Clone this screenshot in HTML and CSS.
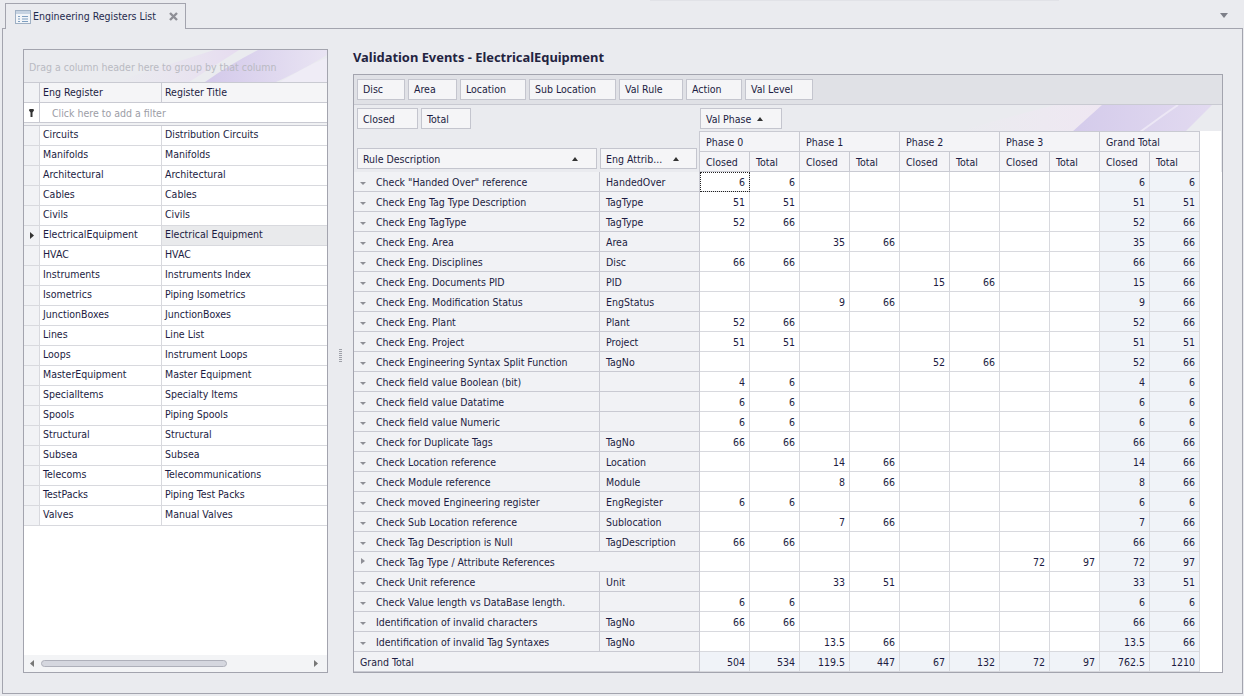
FILE: index.html
```html
<!DOCTYPE html>
<html>
<head>
<meta charset="utf-8">
<title>Engineering Registers List</title>
<link rel="stylesheet" href="styles.css">
</head>
<body>
<div class="topstrip"></div>
<div class="tabbar">
  <div class="tab">
    <svg class="tabicon" width="16" height="14" viewBox="0 0 16 14"><rect x="0.5" y="0.5" width="15" height="13" fill="#f2f5f9" stroke="#9fb0c4"/><rect x="1" y="1" width="14" height="3" fill="#c6d3e2"/><path d="M3 6.500h2M7 6.500h6M3 9h2M7 9h6M3 11.500h2M7 11.500h6" stroke="#7f9fc0"/></svg>
    <span>Engineering Registers List</span>
    <svg class="tabclose" width="9" height="9" viewBox="0 0 9 9"><path d="M1 1l7 7M8 1l-7 7" stroke="#8e8f96" stroke-width="2.400"/></svg>
  </div>
  <svg class="tabmenu" width="8" height="5" viewBox="0 0 8 5"><path d="M0 0h8L4 5z" fill="#7d7f88"/></svg>
</div>
<main class="panel">
  <section class="grid">
    <div class="group">
      <svg class="deco" width="303" height="32" viewBox="0 0 303 32"><defs><linearGradient id="g1" x1="0" x2="1"><stop offset="0" stop-color="#e9e2f1" stop-opacity="0"/><stop offset="1" stop-color="#e6dcf0"/></linearGradient><linearGradient id="g3" x1="0" x2="1"><stop offset="0" stop-color="#d3c9ea"/><stop offset="1" stop-color="#e9e4f3"/></linearGradient></defs><path d="M90 32L190 0H215L165 32z" fill="url(#g1)"/><path d="M181 32C198 20 216 9 234 0H303V5C288 14 272 23 252 32z" fill="url(#g3)"/><path d="M256 32C272 23 290 12 303 8V32z" fill="#efecf6"/></svg>
      <span>Drag a column header here to group by that column</span>
    </div>
    <div class="grow ghead"><b></b><div>Eng Register</div><div>Register Title</div></div>
    <div class="grow gfilter"><b><svg width="5" height="8" viewBox="0 0 5 8"><path d="M0.500 0H4.500L5 1.500 3.500 3.500V8H1.500V3.500L0 1.500z" fill="#333"/></svg></b><div>Click here to add a filter</div></div>
    <div class="gsep"></div>
    <div class="grow"><b></b><div>Circuits</div><div>Distribution Circuits</div></div>
    <div class="grow"><b></b><div>Manifolds</div><div>Manifolds</div></div>
    <div class="grow"><b></b><div>Architectural</div><div>Architectural</div></div>
    <div class="grow"><b></b><div>Cables</div><div>Cables</div></div>
    <div class="grow"><b></b><div>Civils</div><div>Civils</div></div>
    <div class="grow sel"><b><svg width="4" height="7" viewBox="0 0 4 7"><path d="M0 0l4 3.500L0 7z" fill="#333"/></svg></b><div>ElectricalEquipment</div><div>Electrical Equipment</div></div>
    <div class="grow"><b></b><div>HVAC</div><div>HVAC</div></div>
    <div class="grow"><b></b><div>Instruments</div><div>Instruments Index</div></div>
    <div class="grow"><b></b><div>Isometrics</div><div>Piping Isometrics</div></div>
    <div class="grow"><b></b><div>JunctionBoxes</div><div>JunctionBoxes</div></div>
    <div class="grow"><b></b><div>Lines</div><div>Line List</div></div>
    <div class="grow"><b></b><div>Loops</div><div>Instrument Loops</div></div>
    <div class="grow"><b></b><div>MasterEquipment</div><div>Master Equipment</div></div>
    <div class="grow"><b></b><div>SpecialItems</div><div>Specialty Items</div></div>
    <div class="grow"><b></b><div>Spools</div><div>Piping Spools</div></div>
    <div class="grow"><b></b><div>Structural</div><div>Structural</div></div>
    <div class="grow"><b></b><div>Subsea</div><div>Subsea</div></div>
    <div class="grow"><b></b><div>Telecoms</div><div>Telecommunications</div></div>
    <div class="grow"><b></b><div>TestPacks</div><div>Piping Test Packs</div></div>
    <div class="grow"><b></b><div>Valves</div><div>Manual Valves</div></div>
    <div class="gspace"></div>
    <div class="hscroll">
      <svg width="4" height="7" viewBox="0 0 4 7"><path d="M4 0L0 3.500 4 7z" fill="#777"/></svg>
      <div class="track"><div class="thumb"></div></div>
      <svg width="4" height="7" viewBox="0 0 4 7"><path d="M0 0l4 3.500L0 7z" fill="#777"/></svg>
    </div>
  </section>
  <div class="splitter"><span></span></div>
  <section class="right">
    <h1>Validation Events - ElectricalEquipment</h1>
    <div class="pivot">
      <div class="filters">
        <span class="btn w48">Disc</span><span class="btn w49">Area</span><span class="btn w66">Location</span><span class="btn w87">Sub Location</span><span class="btn w64">Val Rule</span><span class="btn w56">Action</span><span class="btn w68">Val Level</span>
      </div>
      <div class="headzone">
        <svg class="deco" width="867" height="27" viewBox="0 0 867 27"><defs><linearGradient id="g2" x1="0" x2="1"><stop offset="0" stop-color="#efe9f3" stop-opacity="0"/><stop offset="1" stop-color="#efe7f2"/></linearGradient><linearGradient id="g4" x1="0" x2="1"><stop offset="0" stop-color="#d4cbeb"/><stop offset="1" stop-color="#e2daf0"/></linearGradient></defs><path d="M600 27L700 0H750L718 27z" fill="url(#g2)"/><path d="M718 27L748 0H858L831 27z" fill="url(#g4)"/><path d="M786 27C800 17 812 8 824 0" stroke="#ece7f5" stroke-width="2" fill="none"/></svg>
        <div class="hleft">
          <div class="dataflds"><span class="btn w61">Closed</span><span class="btn w50">Total</span></div>
          <div class="rowflds"><span class="btn w240">Rule Description<i class="asc"></i></span><span class="btn w97">Eng Attrib...<i class="asc"></i></span></div>
        </div>
        <div class="hright">
          <div class="colfld"><span class="btn w82">Val Phase<i class="asc"></i></span></div>
          <div class="cwrap"><div class="chead">
            <div class="c2">Phase 0</div><div class="c2">Phase 1</div><div class="c2">Phase 2</div><div class="c2">Phase 3</div><div class="c2">Grand Total</div>
            <div>Closed</div><div>Total</div><div>Closed</div><div>Total</div><div>Closed</div><div>Total</div><div>Closed</div><div>Total</div><div>Closed</div><div>Total</div>
          </div></div>
        </div>
      </div>
      <div class="rows">
        <div class="prow"><div class="rh"><i class="ex"></i>Check "Handed Over" reference</div><div class="rh">HandedOver</div><div class="focus">6</div><div>6</div><div></div><div></div><div></div><div></div><div></div><div></div><div class="gt">6</div><div class="gt">6</div></div>
        <div class="prow"><div class="rh"><i class="ex"></i>Check Eng Tag Type Description</div><div class="rh">TagType</div><div>51</div><div>51</div><div></div><div></div><div></div><div></div><div></div><div></div><div class="gt">51</div><div class="gt">51</div></div>
        <div class="prow"><div class="rh"><i class="ex"></i>Check Eng TagType</div><div class="rh">TagType</div><div>52</div><div>66</div><div></div><div></div><div></div><div></div><div></div><div></div><div class="gt">52</div><div class="gt">66</div></div>
        <div class="prow"><div class="rh"><i class="ex"></i>Check Eng. Area</div><div class="rh">Area</div><div></div><div></div><div>35</div><div>66</div><div></div><div></div><div></div><div></div><div class="gt">35</div><div class="gt">66</div></div>
        <div class="prow"><div class="rh"><i class="ex"></i>Check Eng. Disciplines</div><div class="rh">Disc</div><div>66</div><div>66</div><div></div><div></div><div></div><div></div><div></div><div></div><div class="gt">66</div><div class="gt">66</div></div>
        <div class="prow"><div class="rh"><i class="ex"></i>Check Eng. Documents PID</div><div class="rh">PID</div><div></div><div></div><div></div><div></div><div>15</div><div>66</div><div></div><div></div><div class="gt">15</div><div class="gt">66</div></div>
        <div class="prow"><div class="rh"><i class="ex"></i>Check Eng. Modification Status</div><div class="rh">EngStatus</div><div></div><div></div><div>9</div><div>66</div><div></div><div></div><div></div><div></div><div class="gt">9</div><div class="gt">66</div></div>
        <div class="prow"><div class="rh"><i class="ex"></i>Check Eng. Plant</div><div class="rh">Plant</div><div>52</div><div>66</div><div></div><div></div><div></div><div></div><div></div><div></div><div class="gt">52</div><div class="gt">66</div></div>
        <div class="prow"><div class="rh"><i class="ex"></i>Check Eng. Project</div><div class="rh">Project</div><div>51</div><div>51</div><div></div><div></div><div></div><div></div><div></div><div></div><div class="gt">51</div><div class="gt">51</div></div>
        <div class="prow"><div class="rh"><i class="ex"></i>Check Engineering Syntax Split Function</div><div class="rh">TagNo</div><div></div><div></div><div></div><div></div><div>52</div><div>66</div><div></div><div></div><div class="gt">52</div><div class="gt">66</div></div>
        <div class="prow"><div class="rh"><i class="ex"></i>Check field value Boolean (bit)</div><div class="rh"></div><div>4</div><div>6</div><div></div><div></div><div></div><div></div><div></div><div></div><div class="gt">4</div><div class="gt">6</div></div>
        <div class="prow"><div class="rh"><i class="ex"></i>Check field value Datatime</div><div class="rh"></div><div>6</div><div>6</div><div></div><div></div><div></div><div></div><div></div><div></div><div class="gt">6</div><div class="gt">6</div></div>
        <div class="prow"><div class="rh"><i class="ex"></i>Check field value Numeric</div><div class="rh"></div><div>6</div><div>6</div><div></div><div></div><div></div><div></div><div></div><div></div><div class="gt">6</div><div class="gt">6</div></div>
        <div class="prow"><div class="rh"><i class="ex"></i>Check for Duplicate Tags</div><div class="rh">TagNo</div><div>66</div><div>66</div><div></div><div></div><div></div><div></div><div></div><div></div><div class="gt">66</div><div class="gt">66</div></div>
        <div class="prow"><div class="rh"><i class="ex"></i>Check Location reference</div><div class="rh">Location</div><div></div><div></div><div>14</div><div>66</div><div></div><div></div><div></div><div></div><div class="gt">14</div><div class="gt">66</div></div>
        <div class="prow"><div class="rh"><i class="ex"></i>Check Module reference</div><div class="rh">Module</div><div></div><div></div><div>8</div><div>66</div><div></div><div></div><div></div><div></div><div class="gt">8</div><div class="gt">66</div></div>
        <div class="prow"><div class="rh"><i class="ex"></i>Check moved Engineering register</div><div class="rh">EngRegister</div><div>6</div><div>6</div><div></div><div></div><div></div><div></div><div></div><div></div><div class="gt">6</div><div class="gt">6</div></div>
        <div class="prow"><div class="rh"><i class="ex"></i>Check Sub Location reference</div><div class="rh">Sublocation</div><div></div><div></div><div>7</div><div>66</div><div></div><div></div><div></div><div></div><div class="gt">7</div><div class="gt">66</div></div>
        <div class="prow"><div class="rh"><i class="ex"></i>Check Tag Description is Null</div><div class="rh">TagDescription</div><div>66</div><div>66</div><div></div><div></div><div></div><div></div><div></div><div></div><div class="gt">66</div><div class="gt">66</div></div>
        <div class="prow"><div class="rh span2"><i class="col"></i>Check Tag Type / Attribute References</div><div></div><div></div><div></div><div></div><div></div><div></div><div>72</div><div>97</div><div class="gt">72</div><div class="gt">97</div></div>
        <div class="prow"><div class="rh"><i class="ex"></i>Check Unit reference</div><div class="rh">Unit</div><div></div><div></div><div>33</div><div>51</div><div></div><div></div><div></div><div></div><div class="gt">33</div><div class="gt">51</div></div>
        <div class="prow"><div class="rh"><i class="ex"></i>Check Value length vs DataBase length.</div><div class="rh"></div><div>6</div><div>6</div><div></div><div></div><div></div><div></div><div></div><div></div><div class="gt">6</div><div class="gt">6</div></div>
        <div class="prow"><div class="rh"><i class="ex"></i>Identification of invalid characters</div><div class="rh">TagNo</div><div>66</div><div>66</div><div></div><div></div><div></div><div></div><div></div><div></div><div class="gt">66</div><div class="gt">66</div></div>
        <div class="prow"><div class="rh"><i class="ex"></i>Identification of invalid Tag Syntaxes</div><div class="rh">TagNo</div><div></div><div></div><div>13.5</div><div>66</div><div></div><div></div><div></div><div></div><div class="gt">13.5</div><div class="gt">66</div></div>
        <div class="prow total"><div class="rh span2 tl">Grand Total</div><div class="gt">504</div><div class="gt">534</div><div class="gt">119.5</div><div class="gt">447</div><div class="gt">67</div><div class="gt">132</div><div class="gt">72</div><div class="gt">97</div><div class="gt">762.5</div><div class="gt">1210</div></div>
      </div>
    </div>
  </section>
</main>
</body>
</html>
```
FILE: styles.css
```css
* { box-sizing: border-box; }
html, body { margin: 0; height: 696px; overflow: hidden; }
body {
  background: #eaebef;
  font: 10.5px/17px "DejaVu Sans Condensed", "DejaVu Sans", sans-serif;
  font-stretch: condensed;
  color: #1c1c42;
  display: flex;
  flex-direction: column;
  width: 1244px;
}
.topstrip { height: 1px; margin: 0 185px 0 650px; background: #e1e2e7; flex: none; }
.tabbar { height: 27px; flex: none; padding-left: 5px; padding-top: 2px; display: flex; position: relative; z-index: 1; }
.tab {
  width: 181px; height: 26px;
  border: 1px solid #a3a4ae; border-bottom: 0;
  background: #eaebef;
  display: flex; align-items: center;
  padding-left: 9px;
  color: #1f2a4d;
  white-space: nowrap;
}
.tabicon { margin-right: 2px; flex: none; }
.tabclose { margin-left: 13px; flex: none; }
.tabmenu { position: absolute; right: 16px; top: 12px; }
main.panel {
  flex: none;
  height: 666px;
  width: 1241px;
  margin-left: 2px;
  border: 1px solid #a3a4ae;
  padding: 20px;
  display: flex;
  align-items: flex-start;
  background: #eaebef;
}
.grid {
  width: 305px; height: 624px;
  flex: none;
  border: 1px solid #a3a4ae;
  background: #fff;
  display: flex; flex-direction: column;
}
.group {
  height: 33px; flex: none;
  background: #eaebef;
  border-bottom: 1px solid #c9cad2;
  position: relative;
  color: #b9bac2;
  padding: 9px 0 0 5px;
  white-space: nowrap;
  overflow: hidden;
}
.group span { position: relative; }
.deco { position: absolute; left: 0; top: 0; }
.grow {
  height: 20px; flex: none;
  display: grid;
  grid-template-columns: 16px 122px 1fr;
  border-bottom: 1px solid #d8d9de;
}
.grow > * { border-right: 1px solid #d8d9de; padding-left: 3px; white-space: nowrap; }
.grow > *:last-child { border-right: 0; }
.grow b { background: #f1f2f5; padding: 0; display: flex; align-items: center; justify-content: center; }
.ghead { background: #f5f5f7; border-color: #c9cad2; }
.ghead > * { border-color: #c9cad2; padding-top: 1px; }
.gfilter { grid-template-columns: 16px 1fr; border-color: #c9cad2; }
.gfilter b { background: #fff; border-color: #c9cad2; }
.gfilter > div { padding-left: 12px; padding-top: 2px; color: #9c9da6; }
.gsep { height: 3px; flex: none; background: #f0f1f3; border-bottom: 1px solid #c9cad2; }
.sel > div:last-child { background: #e9eaec; }
.gspace { flex: 1; }
.hscroll {
  height: 17px; flex: none;
  background: #f3f4f6;
  display: flex; align-items: center;
  padding: 0 9px 0 6px;
}
.track { flex: 1; padding-left: 7px; }
.thumb {
  width: 186px; height: 7px;
  border: 1px solid #aeb0ba;
  border-radius: 4px;
  background: #d5d7df;
}
.splitter { width: 25px; flex: none; height: 624px; display: flex; align-items: center; justify-content: center; }
.splitter span { width: 3px; height: 13px; margin-top: -12px; background: repeating-linear-gradient(#9ea0a8 0 1px, transparent 1px 2px); }
.right { width: 870px; flex: none; }
h1 { margin: 0; font: 700 12.9px/16px "Noto Sans", sans-serif; color: #23233f; height: 25px; }
.pivot {
  height: 599px;
  border: 1px solid #a3a4ae;
  background: #fff;
  display: flex; flex-direction: column;
}
.filters {
  height: 30px; flex: none;
  background: #e0e1e6;
  border-bottom: 1px solid #c9cad2;
  padding: 4px 3px;
  display: flex; gap: 3px;
}
.btn {
  height: 21px; flex: none;
  background: #f5f5f7;
  border: 1px solid #c4c5ce;
  padding-left: 5px;
  display: flex; align-items: center;
  white-space: nowrap;
  position: relative;
}
.headzone .btn { padding-top: 2px; }
.w48 { width: 48px; } .w49 { width: 49px; } .w66 { width: 66px; } .w87 { width: 87px; }
.w64 { width: 64px; } .w56 { width: 56px; } .w68 { width: 68px; } .w61 { width: 61px; } .w50 { width: 50px; }
.w240 { width: 240px; } .w97 { width: 97px; } .w82 { width: 82px; }
.asc { position: absolute; top: 8px; width: 0; height: 0; border: 3.5px solid transparent; border-top: 0; border-bottom: 4px solid #333; }
.w240 .asc { left: 214px; }
.w97 .asc { left: 72px; }
.w82 .asc { left: 56px; }
.headzone {
  height: 67px; flex: none;
  background: #eaebef;
  display: flex;
  position: relative;
}
.hleft { width: 346px; position: relative; flex: none; padding: 3px 0 0 3px; display: flex; flex-direction: column; }
.dataflds { display: flex; gap: 3px; }
.rowflds { display: flex; gap: 3px; margin-top: 19px; }
.hright { position: relative; width: 521px; }
.colfld { height: 26px; padding-top: 3px; }
.cwrap { background: #fff; height: 41px; }
.chead { display: grid; grid-template-columns: repeat(10, 50px); grid-auto-rows: 20px; border-top: 1px solid #c9cad2; margin-left: -1px; width: 501px; border-left: 1px solid #c9cad2; }
.chead > div { background: #f4f4f7; border-right: 1px solid #c9cad2; border-bottom: 1px solid #c9cad2; padding: 2px 0 0 6px; white-space: nowrap; }
.chead .c2 { grid-column: span 2; }
.rows { flex: 1; }
.prow { display: grid; grid-template-columns: 246px 100px repeat(10, 50px); height: 20px; width: 846px; }
.prow > div { border-right: 1px solid #d8d9de; border-bottom: 1px solid #d8d9de; text-align: right; padding: 2px 4px 0 0; white-space: nowrap; }
.prow > .rh { background: #f1f2f5; text-align: left; padding-left: 6px; padding-right: 0; border-color: #c9cad2; }
.prow > .rh:first-child { padding-left: 22px; position: relative; }
.prow > .span2 { grid-column: span 2; }
.prow > .tl:first-child { padding-left: 6px; }
.prow > .gt { background: #f0f3f8; }
.prow > .focus { outline: 1px dotted #222; outline-offset: -1px; }
.ex { position: absolute; left: 6px; top: 10px; border: 3.5px solid transparent; border-bottom: 0; border-top: 3.5px solid #8e8f96; width: 0; height: 0; }
.col { position: absolute; left: 7px; top: 6px; border: 3.5px solid transparent; border-right: 0; border-left: 4px solid #8e8f96; width: 0; height: 0; }
```
